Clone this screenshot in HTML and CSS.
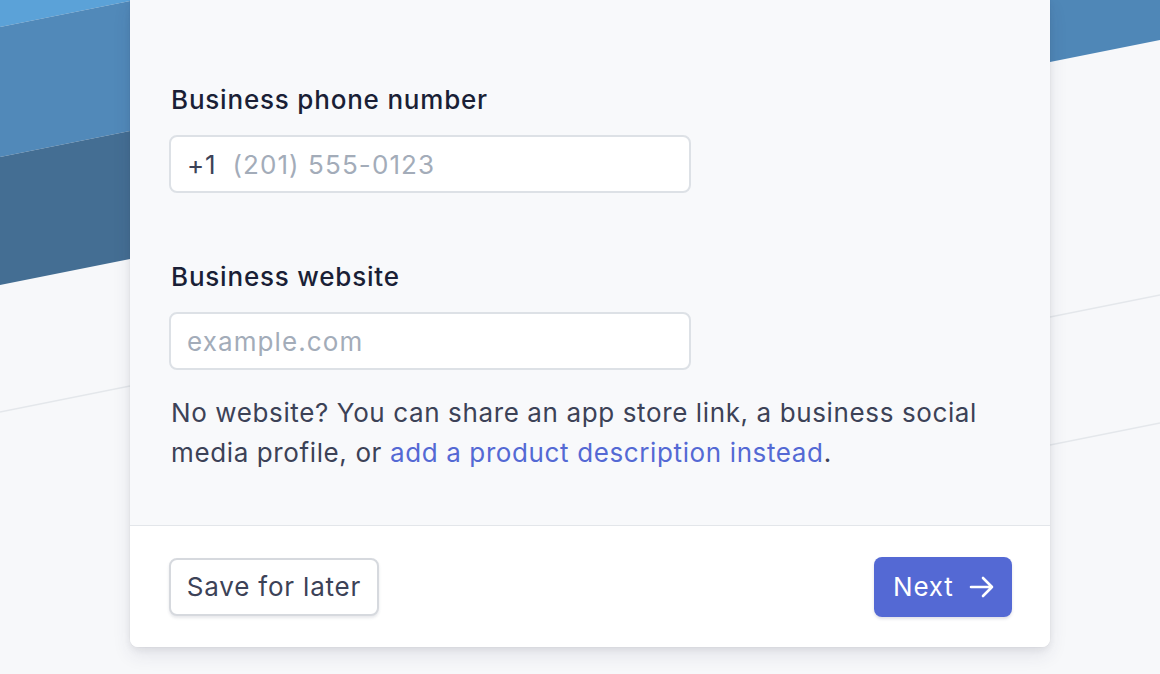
FILE: index.html
```html
<!DOCTYPE html>
<html lang="en">
<head>
<meta charset="utf-8">
<title>Business details</title>
<link rel="stylesheet" href="styles.css">
</head>
<body>
<svg class="backdrop" width="1160" height="674" viewBox="0 0 1160 674" aria-hidden="true">
  <polygon points="0,0 140,0 140,-1 0,27" fill="#5ba2d8"/>
  <polygon points="0,27 140,-1 140,129 0,157" fill="#5189b9"/>
  <polygon points="0,157 140,129 140,257 0,285" fill="#446e93"/>
  <polygon points="1040,0 1160,0 1160,40 1040,64" fill="#4f87b7"/>
  <line x1="0" y1="412" x2="140" y2="384" stroke="#e4e7eb" stroke-width="1.5"/>
  <line x1="1040" y1="319" x2="1160" y2="295" stroke="#e4e7eb" stroke-width="1.5"/>
  <line x1="1040" y1="447" x2="1160" y2="423" stroke="#e4e7eb" stroke-width="1.5"/>
</svg>
<main class="card">
  <div class="card-body">
    <div class="field">
      <label class="label" for="phone">Business phone number</label>
      <div class="input">
        <span class="prefix">+1</span>
        <input id="phone" type="text" placeholder="(201) 555-0123">
      </div>
    </div>
    <div class="field field-second">
      <label class="label" for="site">Business website</label>
      <div class="input">
        <input id="site" type="text" placeholder="example.com">
      </div>
      <p class="help">No website? You can share an app store link, a business social media profile, or <a class="help-link" href="#">add a product description instead</a>.</p>
    </div>
  </div>
  <footer class="card-footer">
    <button class="btn btn-secondary" type="button">Save for later</button>
    <button class="btn btn-primary" type="button">Next
      <svg class="arrow" width="26" height="24" viewBox="0 0 26 24" aria-hidden="true"><path d="M2 12 H23 M14 3 L23 12 L14 21" fill="none" stroke="#fff" stroke-width="2.6" stroke-linecap="round" stroke-linejoin="round"/></svg>
    </button>
  </footer>
</main>
</body>
</html>
```
FILE: styles.css
```css
* { box-sizing: border-box; }
html, body { margin: 0; padding: 0; }
body {
  width: 1160px;
  height: 674px;
  overflow: hidden;
  background: #f7f8fa;
  font-family: Inter, "Noto Sans", "Liberation Sans", sans-serif;
  letter-spacing: 0.8px;
  position: relative;
}
.backdrop {
  position: absolute;
  left: 0;
  top: 0;
  z-index: 0;
}
.card {
  position: relative;
  z-index: 1;
  margin-left: 130px;
  width: 920px;
  height: 647px;
  background: #f8f9fb;
  border-radius: 0 0 8px 8px;
  box-shadow: 0 8px 18px rgba(50, 50, 93, 0.10), 0 3px 7px rgba(0, 0, 0, 0.06), 0 0 0 1px rgba(0,0,0,0.015);
  display: flex;
  flex-direction: column;
}
.card-body {
  padding: 84px 39px 0;
  height: 526px;
  border-bottom: 1px solid #e3e6ea;
}
.field { display: flex; flex-direction: column; align-items: flex-start; }
.field-second { margin-top: 68px; }
.label {
  font-size: 26px;
  line-height: 32px;
  font-weight: 500;
  color: #1a1f36;
  padding-left: 2px;
  margin-bottom: 19px;
}
.input {
  width: 522px;
  height: 58px;
  background: #fff;
  border: 2px solid #dde1e6;
  border-radius: 8px;
  display: flex;
  align-items: center;
  padding: 0 16px;
}
.prefix {
  font-size: 26px;
  color: #3c4257;
  margin-right: 16px;
}
.input input {
  border: 0;
  outline: 0;
  background: transparent;
  font-family: inherit;
  letter-spacing: 1.1px;
  font-size: 26px;
  color: #1a1f36;
  padding: 0;
  flex: 1;
}
.input input::placeholder { color: #a3acb9; }
.help {
  margin: 23px 0 0;
  padding-left: 2px;
  font-size: 26px;
  line-height: 40px;
  letter-spacing: 0.62px;
  color: #3c4257;
  width: 820px;
}
.help-link { color: #5469d4; text-decoration: none; }
.card-footer {
  flex: 1;
  background: #fff;
  border-radius: 0 0 8px 8px;
  display: flex;
  align-items: center;
  justify-content: space-between;
  padding: 0 38px 0 39px;
}
.btn {
  font-family: inherit;
  letter-spacing: 0.8px;
  font-size: 26px;
  height: 58px;
  border-radius: 8px;
  display: flex;
  align-items: center;
  cursor: pointer;
}
.btn-secondary {
  background: #fff;
  color: #3c4257;
  border: 2px solid #d6d9de;
  box-shadow: 0 2px 3px rgba(60, 66, 87, 0.12);
  padding: 0 14px;
  width: 210px;
  justify-content: center;
}
.btn-primary {
  background: #5469d4;
  color: #fff;
  border: 0;
  height: 60px;
  width: 138px;
  padding: 0 17px 0 19px;
  justify-content: space-between;
  box-shadow: 0 2px 3px rgba(50, 50, 93, 0.15);
}
.arrow { display: block; }
```
